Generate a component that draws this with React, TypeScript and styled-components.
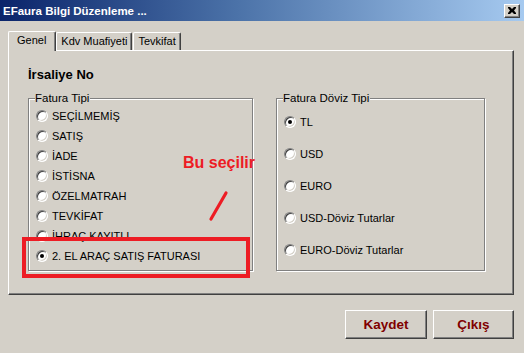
import styled, { createGlobalStyle } from 'styled-components'
import { ReactElement } from 'react'

const GlobalStyle = createGlobalStyle`
  html, body {
    margin: 0;
    padding: 0;
    background: #d4d0c8;
  }
  body {
    font-family: "Liberation Sans", Arial, sans-serif;
    font-size: 11px;
    color: #000;
  }
`

const Window = styled.div`
  position: relative;
  width: 524px;
  height: 353px;
  background: #d4d0c8;
  overflow: hidden;
`

const TitleBar = styled.div`
  height: 21px;
  display: flex;
  align-items: center;
  justify-content: space-between;
  padding: 0 4px 0 3px;
  background: linear-gradient(to right, #0a246a 0%, #4b72a8 45%, #a6caf0 100%);
  box-sizing: border-box;
`

const Title = styled.span`
  color: #fff;
  font-weight: bold;
  font-size: 11.5px;
`

const CloseButton = styled.div`
  width: 16px;
  height: 14px;
  box-sizing: border-box;
  background: #d4d0c8;
  border: 1px solid;
  border-color: #fff #404040 #404040 #fff;
  box-shadow: inset -1px -1px 0 #808080;
  display: flex;
  align-items: center;
  justify-content: center;
`

const Body = styled.div`
  padding: 9px 10px 0 8px;
`

const TabRow = styled.div`
  display: flex;
  align-items: flex-end;
  height: 20px;
`

const Tab = styled.div<{ $active?: boolean }>`
  height: ${p => (p.$active ? '20px' : '18px')};
  box-sizing: border-box;
  padding: 0 ${p => (p.$active ? '9px 0 8px' : '4px')};
  margin-right: ${p => (p.$active ? '0' : '1px')};
  display: flex;
  align-items: center;
  border-top: 1px solid #fff;
  border-left: 1px solid #fff;
  border-right: 1px solid #404040;
  box-shadow: inset -1px 0 0 #808080;
  border-radius: 2px 2px 0 0;
  position: relative;
  z-index: ${p => (p.$active ? 1 : 0)};
  margin-bottom: ${p => (p.$active ? '-1px' : '0')};
  background: #d4d0c8;
  font-size: 11px;
  line-height: 13px;
  padding-bottom: ${p => (p.$active ? '2px' : '0')};
`

const Panel = styled.div`
  position: relative;
  height: 245px;
  box-sizing: border-box;
  border-top: 1px solid #fff;
  border-left: 1px solid #fff;
  border-right: 1px solid #404040;
  border-bottom: 1px solid #404040;
  box-shadow: inset -1px -1px 0 #808080;
  padding: 16px 20px 0 19px;
`

const Heading = styled.div`
  font-weight: bold;
  font-size: 13px;
  line-height: 16px;
`

const GroupRow = styled.div`
  display: flex;
  gap: 23px;
  margin-top: 8px;
`

const Group = styled.fieldset<{ $width: number; $gap: number; $top: number }>`
  width: ${p => p.$width}px;
  height: 180px;
  box-sizing: border-box;
  margin: 0;
  padding: ${p => p.$top}px 0 0 7px;
  border: 1px solid #808080;
  box-shadow: inset 1px 1px 0 #fff, 1px 1px 0 #fff;
  display: flex;
  flex-direction: column;
  gap: ${p => p.$gap}px;
`

const Legend = styled.legend`
  padding: 0 1px 0 0;
  margin-left: -1px;
  font-size: 11.5px;
  line-height: 14px;
  background: #d4d0c8;
`

const Row = styled.label`
  display: flex;
  align-items: center;
  gap: 4px;
  height: 20px;
  font-size: 11px;
  white-space: nowrap;
`

const Radio = styled.span<{ $checked?: boolean }>`
  position: relative;
  width: 12px;
  height: 12px;
  box-sizing: border-box;
  border-radius: 50%;
  background: #fff;
  border: 1px solid;
  border-color: #808080 #fff #fff #808080;
  box-shadow: inset 1px 1px 0 #404040, inset -1px -1px 0 #d4d0c8;
  &::after {
    content: '';
    display: ${p => (p.$checked ? 'block' : 'none')};
    position: absolute;
    left: 3px;
    top: 3px;
    width: 4px;
    height: 4px;
    border-radius: 50%;
    background: #000;
  }
`

const Highlight = styled.div`
  position: absolute;
  left: 13px;
  top: 186px;
  width: 228px;
  height: 41px;
  box-sizing: border-box;
  border: 4px solid #ed1c24;
  pointer-events: none;
`

const Note = styled.div`
  position: absolute;
  left: 174px;
  top: 102px;
  color: #ed1c24;
  font-weight: bold;
  font-size: 16px;
  line-height: 20px;
`

const Stroke = styled.svg`
  position: absolute;
  left: 198px;
  top: 138px;
`

const Footer = styled.div`
  display: flex;
  justify-content: flex-end;
  gap: 6px;
  margin-top: 15px;
`

const Button = styled.button<{ $width: number }>`
  width: ${p => p.$width}px;
  height: 29px;
  box-sizing: border-box;
  background: #d4d0c8;
  border: 1px solid;
  border-color: #fff #404040 #404040 #fff;
  box-shadow: inset -1px -1px 0 #808080;
  font-family: "Liberation Sans", Arial, sans-serif;
  font-weight: bold;
  font-size: 13.5px;
  color: #800000;
  padding: 0;
`

const faturaTipleri = [
  'SEÇİLMEMİŞ',
  'SATIŞ',
  'İADE',
  'İSTİSNA',
  'ÖZELMATRAH',
  'TEVKİFAT',
  'İHRAÇ KAYITLI',
  '2. EL ARAÇ SATIŞ FATURASI'
]

const dovizTipleri = ['TL', 'USD', 'EURO', 'USD-Döviz Tutarlar', 'EURO-Döviz Tutarlar']

function renderRow (label: string, checked: boolean): ReactElement {
  return <Row key={label}><Radio $checked={checked} />{label}</Row>
}

export default function App (): ReactElement {
  return <>
    <GlobalStyle />
    <Window>
      <TitleBar>
        <Title>EFaura Bilgi Düzenleme ...</Title>
        <CloseButton>
          <svg width='8' height='7' viewBox='0 0 8 7'>
            <path d='M0 0h2l2 2 2-2h2v1l-2 2.5 2 2.5v1h-2l-2-2-2 2h-2v-1l2-2.5-2-2.5z' fill='#000' />
          </svg>
        </CloseButton>
      </TitleBar>
      <Body>
        <TabRow>
          <Tab $active>Genel</Tab>
          <Tab>Kdv Muafiyeti</Tab>
          <Tab>Tevkifat</Tab>
        </TabRow>
        <Panel>
          <Heading>İrsaliye No</Heading>
          <GroupRow>
            <Group $width={225} $gap={0} $top={1}>
              <Legend>Fatura Tipi</Legend>
              {faturaTipleri.map((t, i) => renderRow(t, i === faturaTipleri.length - 1))}
            </Group>
            <Group $width={209} $gap={12} $top={7}>
              <Legend>Fatura Döviz Tipi</Legend>
              {dovizTipleri.map((t, i) => renderRow(t, i === 0))}
            </Group>
          </GroupRow>
          <Highlight />
          <Note>Bu seçilir</Note>
          <Stroke width='26' height='34' viewBox='0 0 26 34'>
            <path d='M4 30 L19 4' stroke='#ed1c24' strokeWidth='3.2' strokeLinecap='round' />
          </Stroke>
        </Panel>
        <Footer>
          <Button $width={82}>Kaydet</Button>
          <Button $width={81}>Çıkış</Button>
        </Footer>
      </Body>
    </Window>
  </>
}
